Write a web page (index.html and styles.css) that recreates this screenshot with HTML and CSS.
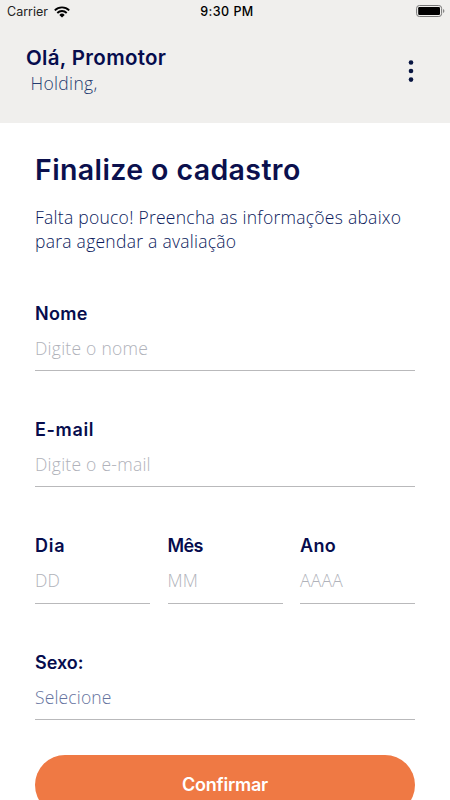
FILE: index.html
```html
<!DOCTYPE html>
<html lang="pt-BR">
<head>
<meta charset="utf-8">
<title>Finalize o cadastro</title>
<link rel="stylesheet" href="styles.css">
</head>
<body>
<div class="screen">
  <header class="header">
    <div class="status">
      <div class="carrier"><span class="carrier-name">Carrier</span>
        <svg class="wifi" width="16" height="12" viewBox="0 0 16 12"><g fill="none" stroke="#000" stroke-width="1.9"><path d="M.8 4.4a10.2 10.2 0 0 1 14.4 0"/><path d="M3.3 7a6.7 6.7 0 0 1 9.4 0"/></g><path d="M8 11.6 5.3 8.9a3.8 3.8 0 0 1 5.4 0z"/></svg>
      </div>
      <span class="time">9:30 PM</span>
      <svg class="battery" width="29" height="12" viewBox="0 0 29 12"><rect x=".6" y=".5" width="25" height="11" rx="2.8" fill="none" stroke="#777"/><rect x="2.2" y="2.1" width="21.8" height="7.8" rx="1.2"/><path d="M27 4v4c1.9-.7 1.9-3.3 0-4z" fill="#888"/></svg>
    </div>
    <div class="greeting">
      <div>
        <div class="hello">Olá, Promotor</div>
        <div class="company">Holding,</div>
      </div>
      <svg class="menu" width="6" height="22" viewBox="0 0 6 22" fill="#081541"><circle cx="3" cy="2.5" r="2.3"/><circle cx="3" cy="11" r="2.3"/><circle cx="3" cy="19.6" r="2.3"/></svg>
    </div>
  </header>
  <main class="content">
    <h1 class="title">Finalize o cadastro</h1>
    <p class="intro">Falta pouco! Preencha as informações abaixo<br>para agendar a avaliação</p>
    <form class="form">
      <div class="field"><div class="label">Nome</div><div class="value">Digite o nome</div></div>
      <div class="field"><div class="label email">E-mail</div><div class="value">Digite o e-mail</div></div>
      <div class="date">
        <div class="field"><div class="label day">Dia</div><div class="value">DD</div></div>
        <div class="field"><div class="label month">Mês</div><div class="value">MM</div></div>
        <div class="field"><div class="label">Ano</div><div class="value">AAAA</div></div>
      </div>
      <div class="field"><div class="label sex">Sexo:</div><div class="value select">Selecione</div></div>
    </form>
    <button class="confirm" type="button">Confirmar</button>
  </main>
</div>
</body>
</html>
```
FILE: styles.css
```css
* { box-sizing: border-box; }
body { margin: 0; background: #fff; font-family: "Open Sans", sans-serif; font-weight: 300; color: #0a1a5c; }
.screen { height: 800px; overflow: hidden; }
.header { height: 123px; background: #f0efed; }
.status { display: grid; grid-template-columns: 1fr auto 1fr; align-items: center; height: 23px; padding: 0 5px 0 7px; font: 400 12.5px/23px Inter, sans-serif; color: #000; }
.carrier { display: flex; align-items: center; gap: 6px; color: #222; }
.wifi { display: block; }
.time { position: relative; left: 1px; font-weight: 500; letter-spacing: .45px; }
.battery { position: relative; top: -1px; justify-self: end; }
.greeting { display: flex; justify-content: space-between; padding: 21px 36.5px 0 26px; }
.hello { font: 600 20.5px/28px Inter, sans-serif; letter-spacing: .32px; color: #060c4d; }
.company { margin-top: -1px; padding-left: 4.5px; font-size: 17.5px; line-height: 24px; letter-spacing: .35px; color: #243b70; }
.menu { margin-top: 16px; }
.content { padding: 0 35px; }
.title { margin: 29px 0 0; font: 600 28.5px/36px Inter, sans-serif; letter-spacing: .39px; color: #0b104d; white-space: nowrap; }
.intro { margin: 17px 0 0; font-size: 17.5px; line-height: 24px; letter-spacing: .26px; white-space: nowrap; }
.form { display: grid; gap: 46.3px; margin-top: 48px; }
.field { border-bottom: 1px solid #b9b9bb; }
.label { padding-top: 1px; font: 600 18px/24px Inter, sans-serif; letter-spacing: .3px; color: #060c4d; }
.email { letter-spacing: .65px; }
.day { letter-spacing: .8px; }
.month { letter-spacing: -.6px; }
.sex { letter-spacing: 0; }
.value { padding: 10px 0; font-size: 17.5px; line-height: 24px; letter-spacing: .25px; color: #b0b2ba; }
.select { letter-spacing: .15px; color: #65739e; }
.date { display: grid; grid-template-columns: repeat(3, 1fr); gap: 17.5px; }
.date .label { padding-top: 0; }
.date .value { padding-bottom: 11px; }
.confirm { display: block; width: 100%; height: 60px; margin-top: 35px; border: 0; border-radius: 30px; background: #ef7944; color: #fff; font: 600 18px/60px Inter, sans-serif; letter-spacing: -.25px; padding: 0; }
```
